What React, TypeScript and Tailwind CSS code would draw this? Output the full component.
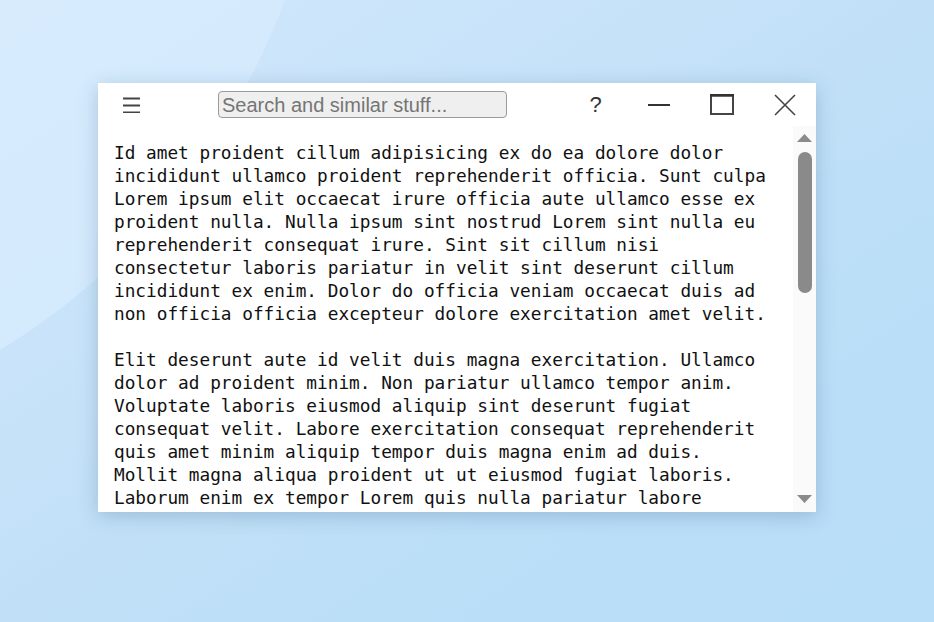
import React from 'react';

const paragraphs = [
  'Id amet proident cillum adipisicing ex do ea dolore dolor incididunt ullamco proident reprehenderit officia. Sunt culpa Lorem ipsum elit occaecat irure officia aute ullamco esse ex proident nulla. Nulla ipsum sint nostrud Lorem sint nulla eu reprehenderit consequat irure. Sint sit cillum nisi consectetur laboris pariatur in velit sint deserunt cillum incididunt ex enim. Dolor do officia veniam occaecat duis ad non officia officia excepteur dolore exercitation amet velit.',
  'Elit deserunt aute id velit duis magna exercitation. Ullamco dolor ad proident minim. Non pariatur ullamco tempor anim. Voluptate laboris eiusmod aliquip sint deserunt fugiat consequat velit. Labore exercitation consequat reprehenderit quis amet minim aliquip tempor duis magna enim ad duis. Mollit magna aliqua proident ut ut eiusmod fugiat laboris. Laborum enim ex tempor Lorem quis nulla pariatur labore',
];

const Background = () => (
  <svg className="absolute inset-0 h-full w-full" viewBox="0 0 934 622" preserveAspectRatio="none">
    <defs>
      <linearGradient id="bg" x1="0" y1="0" x2="1" y2="1">
        <stop offset="0" stopColor="#d3e8fc" />
        <stop offset="0.5" stopColor="#c1e0f8" />
        <stop offset="1" stopColor="#b3dbf6" />
      </linearGradient>
    </defs>
    <rect width="934" height="622" fill="url(#bg)" />
    <path d="M0 0 H285 C240 120 150 260 0 350 Z" fill="#d9ecfd" opacity="0.7" />
    <path d="M330 622 C360 420 560 200 934 150 V622 Z" fill="#bde0f8" opacity="0.6" />
  </svg>
);

const Scrollbar = () => (
  <div className="flex w-[23px] shrink-0 flex-col items-center bg-[#fafafa] pb-[9px] pt-[8px]">
    <svg width="15" height="8" viewBox="0 0 15 8">
      <path d="M7.5 0 L15 8 H0 Z" fill="#8a8a8a" />
    </svg>
    <div className="mt-[10px] h-[141px] w-[14px] rounded-full bg-[#8a8a8a]" />
    <div className="flex-1" />
    <svg width="15" height="8" viewBox="0 0 15 8">
      <path d="M0 0 H15 L7.5 8 Z" fill="#8a8a8a" />
    </svg>
  </div>
);

const App = () => {
  return (
    <div className="relative h-[622px] w-[934px] overflow-hidden">
      <Background />
      <div className="relative pl-[98px] pt-[83px]">
        <div className="flex h-[429px] w-[718px] flex-col bg-white shadow-[0_4px_18px_rgba(40,80,120,0.25)]">
          {/* Header */}
          <div className="flex h-[43px] shrink-0 items-center">
            <button className="flex h-full w-[66px] items-center justify-center">
              <svg width="17" height="16" viewBox="0 0 17 16">
                <rect x="0" y="0.5" width="17" height="2" fill="#444" />
                <rect x="0" y="7.5" width="17" height="2" fill="#444" />
                <rect x="0" y="14.5" width="17" height="2" fill="#444" />
              </svg>
            </button>
            <input
              className="ml-[54px] h-[27px] w-[289px] rounded-[4px] border border-[#9a9a9a] bg-[#efefef] px-[3px] text-[20px] text-[#222] outline-none placeholder:text-[#757575]"
              style={{ fontFamily: '"Liberation Sans", Arial, sans-serif' }}
              placeholder="Search and similar stuff..."
            />
            <div className="flex-1" />
            <button
              className="flex h-full w-[63px] items-center justify-center text-[22px] text-[#333]"
              style={{ fontFamily: '"Liberation Sans", Arial, sans-serif' }}
            >
              ?
            </button>
            <button className="flex h-full w-[63px] items-center justify-center">
              <svg width="22" height="4" viewBox="0 0 22 4">
                <rect x="0" y="1" width="22" height="2" fill="#333" />
              </svg>
            </button>
            <button className="flex h-full w-[63px] items-center justify-center">
              <svg width="24" height="21" viewBox="0 0 24 21">
                <rect x="1" y="1.5" width="22" height="18.5" fill="none" stroke="#444" strokeWidth="2" />
                <rect x="0" y="0" width="24" height="2.5" fill="#333" />
              </svg>
            </button>
            <button className="flex h-full w-[63px] items-center justify-center">
              <svg width="22" height="22" viewBox="0 0 22 22">
                <path d="M1 1 L21 21 M21 1 L1 21" stroke="#444" strokeWidth="1.6" />
              </svg>
            </button>
          </div>

          {/* Content */}
          <div className="flex min-h-0 flex-1">
            <div
              className="min-w-0 flex-1 overflow-hidden pl-[16px] pt-[16px] text-[17.75px] leading-[23px] text-[#111]"
              style={{ fontFamily: '"DejaVu Sans Mono", monospace' }}
            >
              {paragraphs.map((p, i) => (
                <p key={i} className="w-[658px] [&+p]:mt-[23px]">
                  {p}
                </p>
              ))}
            </div>
            <Scrollbar />
          </div>
        </div>
      </div>
    </div>
  );
};

export default App;
